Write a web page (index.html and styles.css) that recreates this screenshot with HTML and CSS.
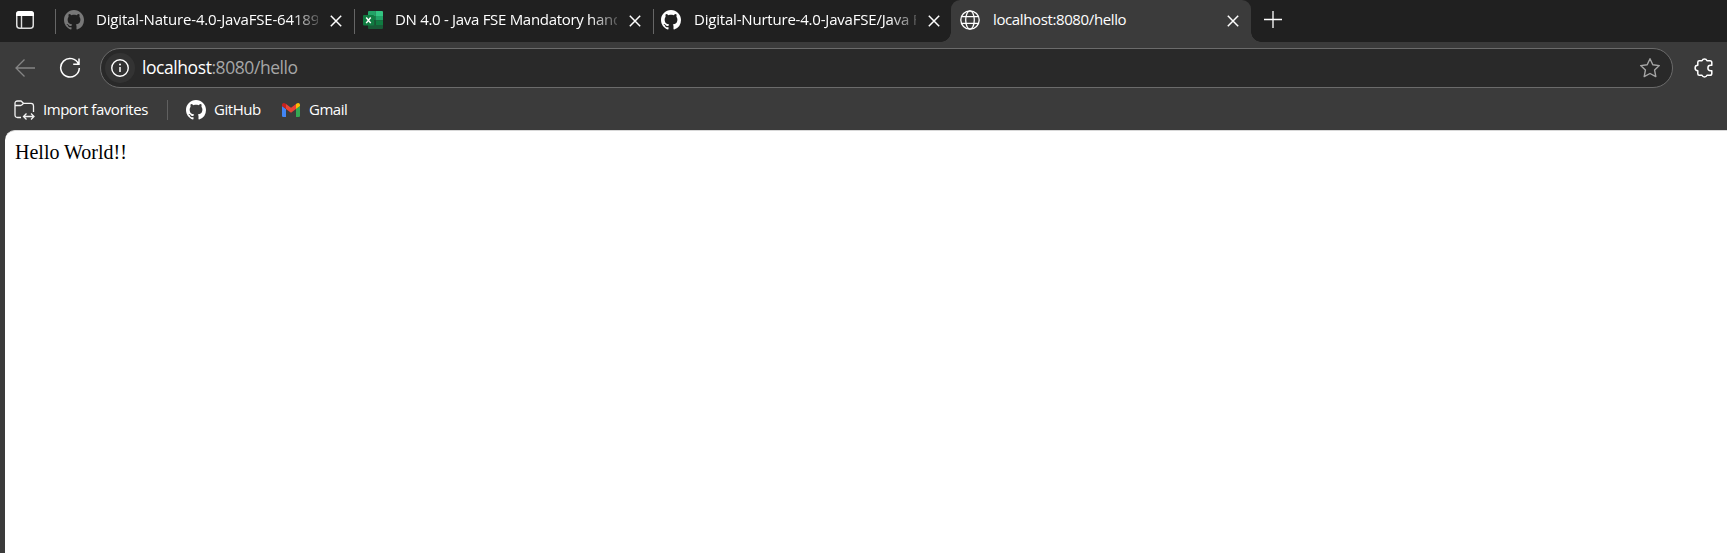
FILE: index.html
```html
<!DOCTYPE html>
<html lang="en">
<head>
<meta charset="utf-8">
<title>localhost:8080/hello</title>
<link rel="stylesheet" href="styles.css">
</head>
<body>
<svg width="0" height="0" class="defs">
  <symbol id="github" viewBox="0 0 16 16"><path fill="currentColor" d="M8 0C3.58 0 0 3.58 0 8c0 3.54 2.29 6.53 5.47 7.59.4.07.55-.17.55-.38 0-.19-.01-.82-.01-1.49-2.01.37-2.53-.49-2.69-.94-.09-.23-.48-.94-.82-1.13-.28-.15-.68-.52-.01-.53.63-.01 1.08.58 1.23.82.72 1.21 1.87.87 2.33.66.07-.52.28-.87.51-1.07-1.78-.2-3.64-.89-3.64-3.95 0-.87.31-1.59.82-2.15-.08-.2-.36-1.02.08-2.12 0 0 .67-.21 2.2.82.64-.18 1.32-.27 2-.27s1.36.09 2 .27c1.53-1.04 2.2-.82 2.2-.82.44 1.1.16 1.92.08 2.12.51.56.82 1.27.82 2.15 0 3.07-1.87 3.75-3.65 3.95.29.25.54.73.54 1.48 0 1.07-.01 1.93-.01 2.2 0 .21.15.46.55.38A8.01 8.01 0 0 0 16 8c0-4.42-3.58-8-8-8z"/></symbol>
  <symbol id="close" viewBox="0 0 12 12"><path d="M.8.8l10.4 10.4M11.200.8L.8 11.2" fill="none" stroke="currentColor" stroke-width="1.5"/></symbol>
</svg>
<header class="tabstrip">
  <div class="workspaces">
    <svg width="18" height="18" viewBox="0 0 18 18"><rect x=".75" y=".75" width="16.500" height="16.500" rx="3" fill="none" stroke="#ddd" stroke-width="1.5"/><path d="M0 5V3Q0 0 3 0h12Q18 0 18 3v2z" fill="#fff"/><path d="M5.500 5v12" stroke="#ddd" stroke-width="1.400"/></svg>
  </div>
  <div class="tab">
    <svg class="favicon dim" width="20" height="20"><use href="#github"/></svg>
    <span class="title fade t1">Digital-Nature-4.0-JavaFSE-64189</span>
    <svg class="close" width="12" height="12"><use href="#close"/></svg>
  </div>
  <div class="tab">
    <svg class="favicon" width="20" height="20" viewBox="0 0 20 20"><path d="M5 2q0-1 1-1h6.500v5H5z" fill="#21a366"/><path d="M12.500 1H19q1 0 1 1v4h-7.500z" fill="#33c481"/><path d="M5 6h7.500v4.500H5z" fill="#107c41"/><path d="M12.500 6H20v4.500h-7.500z" fill="#21a366"/><path d="M12.500 10.500H20V15h-7.500z" fill="#107c41"/><path d="M5 10.500h7.500V15H20v3q0 1-1 1H6q-1 0-1-1z" fill="#185c37"/><rect y="5" width="11" height="10.500" rx="1" fill="#107c41"/><path d="M3.200 7.500l4.500 5.600M7.700 7.500l-4.500 5.600" stroke="#fff" stroke-width="1.500"/></svg>
    <span class="title fade t2">DN 4.0 - Java FSE Mandatory hand</span>
    <svg class="close" width="12" height="12"><use href="#close"/></svg>
  </div>
  <div class="tab third">
    <svg class="favicon" width="20" height="20"><use href="#github"/></svg>
    <span class="title fade t3">Digital-Nurture-4.0-JavaFSE/Java F</span>
    <svg class="close" width="12" height="12"><use href="#close"/></svg>
  </div>
  <div class="tab active">
    <svg class="favicon" width="20" height="20" viewBox="0 0 20 20" fill="none" stroke="#fff" stroke-width="1.300"><circle cx="10" cy="10" r="9.200"/><ellipse cx="10" cy="10" rx="4.300" ry="9.200"/><path d="M1.600 6.600h16.800M1.600 13.400h16.800"/></svg>
    <span class="title t4">localhost:8080/hello</span>
    <svg class="close" width="12" height="12"><use href="#close"/></svg>
  </div>
  <svg class="newtab" width="18" height="18" viewBox="0 0 18 18"><path d="M0 9.500h18M9 1v17" stroke="#fff" stroke-width="1.300"/></svg>
</header>
<nav class="toolbar">
  <svg class="back" width="20" height="18" viewBox="0 0 20 18" fill="none" stroke="#858585" stroke-width="1.300"><path d="M20 9H1M9.500.5L1 9l8.500 8.500"/></svg>
  <svg class="reload" width="22" height="22" viewBox="0 0 22 22" fill="none" stroke="#fff" stroke-width="1.500"><path d="M19.600 7.200A9.300 9.300 0 1 0 20.300 11M20 1.500v5.700h-5.800"/></svg>
  <div class="address">
    <span class="info"><svg width="18" height="18" viewBox="0 0 18 18"><circle cx="9" cy="9" r="8.250" fill="none" stroke="#fff" stroke-width="1.400"/><path d="M9 8v5" stroke="#fff" stroke-width="1.500"/><circle cx="9" cy="5.500" r="1" fill="#fff"/></svg></span>
    <span class="url"><b>localhost</b>:8080/hello</span>
    <svg class="star" width="22" height="22" viewBox="0 0 22 22"><path d="M11 1.700l2.800 6 6.500.9-4.700 4.500 1.200 6.500-5.800-3.100-5.800 3.100 1.200-6.500L1.700 8.600l6.500-.9z" fill="none" stroke="#a5a5a5" stroke-width="1.400" stroke-linejoin="round"/></svg>
  </div>
  <svg class="extensions" width="20" height="22" viewBox="0 0 20 22"><path d="M3.800 5.200q0-1.500 1.500-1.500H8a2.700 2.700 0 0 1 5 0h3q1.800 0 1.800 1.800v2.800h-1.200a2.700 2.700 0 0 0 0 5.400h1.200v2.800q0 1.800-1.800 1.800h-3a2.700 2.700 0 0 1-5 0H5.300q-1.500 0-1.500-1.500v-3.100a2.700 2.700 0 0 1 0-5.400z" fill="none" stroke="#fff" stroke-width="1.500" stroke-linejoin="round"/></svg>
</nav>
<nav class="favorites">
  <svg class="folder" width="21" height="20" viewBox="0 0 21 20" fill="none" stroke="#f2f2f2" stroke-width="1.300"><path d="M7 17.500H3.500Q1 17.500 1 15V3.500Q1 1 3.500 1H7l2.500 2.300H17Q19.500 3.300 19.500 6v6M1 5.500h5.500q1 0 1.600-.8L9.500 3.300"/><path d="M9.800 16.500h10M12.500 13.500l-3 3 3 3M17 13.500l3 3-3 3"/></svg>
  <span class="import">Import favorites</span>
  <i class="divider"></i>
  <svg class="gh" width="20" height="20"><use href="#github"/></svg>
  <span class="ghlabel">GitHub</span>
  <svg class="gmail" width="18" height="14" viewBox="0 0 18 14"><path d="M0 3l4 3v8H1.300Q0 14 0 12.700z" fill="#4285f4"/><path d="M18 3l-4 3v8h2.700q1.300 0 1.300-1.300z" fill="#34a853"/><path d="M4 1l5 3.800L14 1v5L9 9.700 4 6z" fill="#ea4335"/><path d="M0 3V2C0 .2 1.800-.6 3.300.5L4 1v5z" fill="#c5221f"/><path d="M18 3V2c0-1.800-1.800-2.600-3.300-1.500L14 1v5z" fill="#fbbc04"/></svg>
  <span class="gmlabel">Gmail</span>
</nav>
<main class="page">Hello World!!</main>
</body>
</html>
```
FILE: styles.css
```css
* { box-sizing: border-box; }
body {
  margin: 0;
  height: 553px;
  display: flex;
  flex-direction: column;
  overflow: hidden;
  background: #3b3b3b;
  color: #fff;
  font: 15px "Open Sans", "Noto Sans", sans-serif;
  white-space: nowrap;
}
svg { display: block; flex: none; }
.defs { position: absolute; }
.tabstrip {
  display: flex;
  height: 42px;
  flex: none;
  background: #202020;
}
.workspaces { width: 55px; padding: 11px 0 0 16px; }
.tab {
  position: relative;
  display: flex;
  align-items: center;
  width: 299px;
  height: 42px;
  padding: 0 12px 2px 9px;
}
.tab::before {
  content: "";
  position: absolute;
  left: 0;
  top: 9px;
  width: 1px;
  height: 25px;
  background: #666;
}
.favicon { color: #fff; }
.dim { color: #787878; }
.title { width: 225px; margin-left: 12px; padding-bottom: 2px; line-height: 22px; overflow: hidden; }
.fade { mask-image: linear-gradient(90deg, #000 195px, transparent 230px); }
.t1 { letter-spacing: -0.17px; }
.t2 { letter-spacing: -0.3px; }
.t3 { letter-spacing: -0.2px; }
.t4 { letter-spacing: -0.38px; }
.close { margin: 2px 0 0 12px; }
.third { padding-left: 8px; }
.third .title { margin-left: 13px; }
.active {
  width: 300px;
  margin-left: -1px;
  background: #3b3b3b;
  border-radius: 9px 9px 0 0;
}
.active::before,
.active::after {
  content: "";
  position: absolute;
  top: 32px;
  width: 10px;
  height: 10px;
}
.active::before { left: -10px; background: radial-gradient(circle at 0 0, #202020 9.5px, #3b3b3b 10px); }
.active::after { left: auto; right: -10px; background: radial-gradient(circle at 100% 0, #202020 9.5px, #3b3b3b 10px); }
.active .title { margin-left: 13px; }
.newtab { margin: 10px 0 0 13px; }
.toolbar {
  display: flex;
  align-items: center;
  height: 48px;
  flex: none;
  padding: 6px 12px 2px 15px;
}
.reload { margin-left: 24px; }
.address {
  display: flex;
  align-items: center;
  width: 1573px;
  height: 40px;
  margin-left: 19px;
  padding: 0 11px 0 4px;
  border: 1px solid #6b6b6b;
  border-radius: 20px;
  background: #292929;
}
.info {
  display: flex;
  align-items: center;
  justify-content: center;
  width: 30px;
  height: 30px;
  border-radius: 50%;
  background: #333;
}
.url { margin-left: 7px; padding-bottom: 2px; font-size: 17.5px; letter-spacing: -0.43px; color: #a6a6a6; }
.url b { font-weight: 400; color: #fff; }
.star { margin-left: auto; }
.extensions { margin-left: 21px; }
.favorites {
  display: flex;
  align-items: center;
  height: 40px;
  flex: none;
  padding-left: 14px;
  letter-spacing: -0.47px;
}
.favorites span { padding-bottom: 2px; }
.import { margin-left: 8px; width: 124px; }
.divider { width: 1px; height: 20px; background: #606060; }
.gh { margin-left: 18px; }
.ghlabel { width: 61px; margin-left: 8px; }
.gmail { margin-left: 7px; }
.gmlabel { margin-left: 9px; }
.page {
  flex: 1;
  margin-left: 5px;
  padding: 10px;
  border-top: 1px solid #d8d8d8;
  border-top-left-radius: 10px;
  background: #fff;
  color: #000;
  font: 20px "Liberation Serif", serif;
}
```
